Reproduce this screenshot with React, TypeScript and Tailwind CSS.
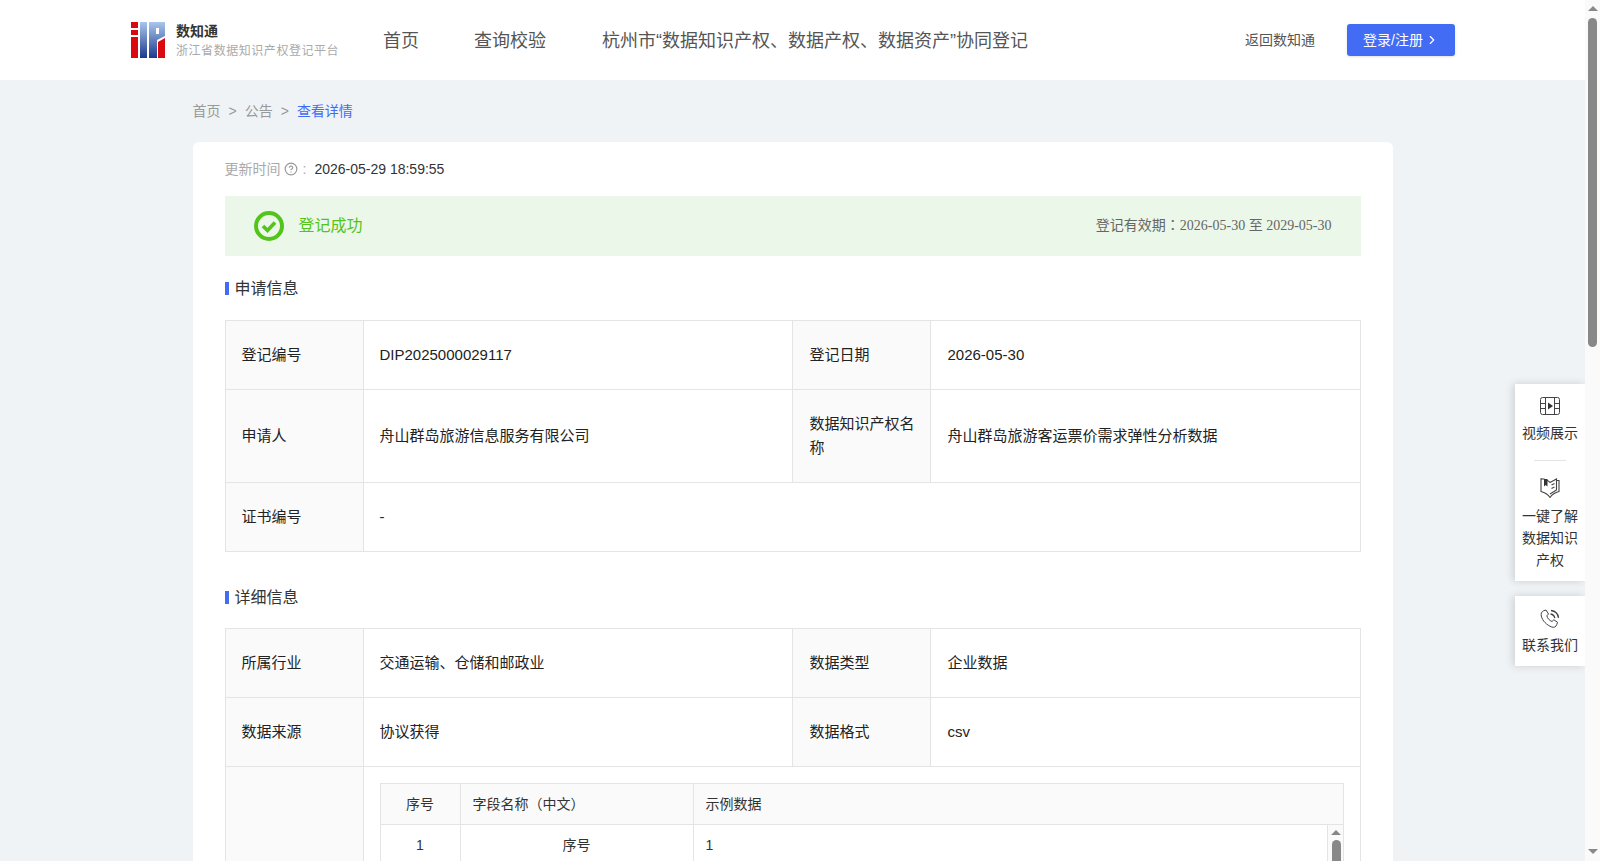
import { ChevronRight, CircleHelp } from "lucide-react";

const cn = "font-['Liberation_Sans','Noto_Sans_CJK_SC',sans-serif]";

const Logo = () => (
  <svg width="34" height="36" viewBox="0 0 34 36" className="shrink-0">
    <defs>
      <linearGradient id="blue" x1="0" y1="0" x2="0" y2="1">
        <stop offset="0" stopColor="#a9c6ee" />
        <stop offset="1" stopColor="#1c3a8c" />
      </linearGradient>
    </defs>
    <rect x="0" y="0" width="7" height="6" fill="#d9090f" />
    <rect x="0" y="8" width="7" height="5" fill="#d9090f" />
    <rect x="0" y="15" width="7" height="21" fill="#d9090f" />
    <rect x="9" y="0" width="7" height="36" fill="url(#blue)" />
    <path d="M18 0H34V14L26 18V36H18Z" fill="url(#blue)" />
    <rect x="25" y="6" width="3" height="6" fill="#fff" />
    <path d="M27 36V20L34 16V36Z" fill="#d9090f" />
  </svg>
);

const VideoIcon = () => (
  <svg width="20" height="18" viewBox="0 0 20 18" fill="none" stroke="#444" strokeWidth="1">
    <rect x="0.5" y="0.5" width="19" height="17" rx="2" />
    <path d="M5.5 0.5V17.500M14.5 0.5V17.500M0.5 6.500H5.5M0.5 11.500H5.5M14.5 6.500H19.500M14.5 11.500H19.500" />
    <path d="M8 5.500L13 9L8 12.500Z" fill="#333" stroke="none" />
  </svg>
);

const BookIcon = () => (
  <svg width="20" height="20" viewBox="0 0 20 20" fill="none" stroke="#444" strokeWidth="1.1">
    <path d="M10 4.500C8 2.500 5 1 1 0.800V13.500C5 14.500 8 16.500 10 19.500C12 16.500 15 14.500 19 13.500V2.500H16.500" />
    <path d="M10 4.500L16.500 1V12L10 16" />
    <path d="M11.500 7L14.500 5.500M11.500 10.500L14.500 9" />
    <path d="M4 1H7.500V8.500L5.700 7L4 8.500Z" fill="#333" stroke="none" />
  </svg>
);

const PhoneIcon = () => (
  <svg width="20" height="20" viewBox="0 0 20 20" fill="none" stroke="#444" strokeWidth="1">
    <path d="M3.500 1.800L6 1L8.500 5L6.800 6.800C7.500 9.500 9.500 11.500 12 12.500L13.800 10.800L17.500 13.200L16.800 15.500C16 18 14 18.800 11.800 18C6.800 16.200 2.500 12 1.300 7C0.800 4.500 1.500 2.800 3.500 1.800Z" />
    <path d="M10.500 5C12.800 5.300 14.500 7 14.800 9.200M11 1.500C15 2 18 5 18.500 8.800" strokeWidth="1.300" />
  </svg>
);

const LabelCell = ({ children, className = "" }: { children?: React.ReactNode; className?: string }) => (
  <td className={`border border-[#e4e4e4] bg-[#fafafa] px-4 leading-[24px] text-[#222] ${className}`}>
    {children}
  </td>
);

const ValueCell = ({ children, colSpan, className = "" }: { children?: React.ReactNode; colSpan?: number; className?: string }) => (
  <td colSpan={colSpan} className={`border border-[#e4e4e4] px-4 text-[#222] ${className}`}>
    {children}
  </td>
);

const Cols = () => (
  <colgroup>
    <col className="w-[138px]" />
    <col className="w-[429px]" />
    <col className="w-[138px]" />
    <col />
  </colgroup>
);

const SectionTitle = ({ title }: { title: string }) => (
  <div className="flex h-6 items-center gap-1.5 text-base text-[#333]">
    <span className="h-[13px] w-1 bg-[#436cf5]" />
    <span className="pt-px leading-[23px]">{title}</span>
  </div>
);

export default function App() {
  return (
    <div className={`${cn} flex h-[861px] w-[1600px] overflow-hidden bg-white`}>
      <div className="relative h-full w-[1585px] overflow-hidden bg-[#eff3f6]">
        <header className="flex h-20 items-center bg-white pl-[131px] pr-[130px]">
          <div className="flex w-[252px] items-center gap-[11px]">
            <Logo />
            <div>
              <div className="text-sm font-bold leading-5 text-[#333]">数知通</div>
              <div className="pt-px text-xs leading-[18px] tracking-[0.55px] text-[#aaa]">浙江省数据知识产权登记平台</div>
            </div>
          </div>
          <nav className="flex gap-[55px] pt-0.5 text-lg text-[#555]">
            <span>首页</span>
            <span>查询校验</span>
            <span className="ml-px">杭州市“数据知识产权、数据产权、数据资产”协同登记</span>
          </nav>
          <div className="ml-auto flex items-center gap-8">
            <span className="text-sm text-[#555]">返回数知通</span>
            <button className="flex h-8 w-[108px] items-center justify-center gap-0.5 rounded-[3px] bg-[#436cf5] text-sm text-white shadow-sm">
              登录/注册
              <ChevronRight size={14} />
            </button>
          </div>
        </header>

        <main className="mx-auto w-[1200px]">
          <div className="flex h-[62px] items-center text-sm text-[#999]">
            <span>首页</span>
            <span className="mx-2">&gt;</span>
            <span>公告</span>
            <span className="mx-2">&gt;</span>
            <span className="text-[#436cf5]">查看详情</span>
          </div>

          <div className="rounded-t-md bg-white px-8 pb-8">
            <div className="flex h-[54px] items-center text-sm">
              <span className="text-[#aaa]">更新时间</span>
              <CircleHelp size={14} className="ml-[3px] text-[#999]" />
              <span className="ml-[5px] mr-2 text-[#aaa]">:</span>
              <span className="text-[#333]">2026-05-29 18:59:55</span>
            </div>

            <div className="flex h-[60px] items-center justify-between bg-[#ebf7e9] px-[29px]">
              <div className="flex items-center gap-[15px] text-base text-[#52c41a]">
                <svg width="30" height="30" viewBox="0 0 30 30" fill="none" stroke="#52c41a">
                  <circle cx="15" cy="15" r="13" strokeWidth="4" />
                  <path d="M9 15L13.500 19.500L21 11.500" strokeWidth="3.600" />
                </svg>
                登记成功
              </div>
              <div className="h-5 font-['Liberation_Serif','Noto_Sans_CJK_SC',serif] text-sm leading-5 text-[#666]">
                登记有效期<span className="font-['Noto_Sans_CJK_TC',serif] leading-none">：</span>2026-05-30 至 2029-05-30
              </div>
            </div>

            <div className="my-5">
              <SectionTitle title="申请信息" />
            </div>

            <table className="w-full table-fixed border-collapse text-[15px]">
              <Cols />
              <tbody>
                <tr className="h-[69px]">
                  <LabelCell>登记编号</LabelCell>
                  <ValueCell>DIP2025000029117</ValueCell>
                  <LabelCell className="pl-[17px] pr-[15px]">登记日期</LabelCell>
                  <ValueCell className="pl-[17px]">2026-05-30</ValueCell>
                </tr>
                <tr className="h-[93px]">
                  <LabelCell>申请人</LabelCell>
                  <ValueCell>舟山群岛旅游信息服务有限公司</ValueCell>
                  <LabelCell className="pl-[17px] pr-[15px]">数据知识产权名称</LabelCell>
                  <ValueCell className="pl-[17px]">舟山群岛旅游客运票价需求弹性分析数据</ValueCell>
                </tr>
                <tr className="h-[69px]">
                  <LabelCell>证书编号</LabelCell>
                  <ValueCell colSpan={3}>-</ValueCell>
                </tr>
              </tbody>
            </table>

            <div className="mb-[19px] mt-[33px]">
              <SectionTitle title="详细信息" />
            </div>

            <table className="w-full table-fixed border-collapse text-[15px]">
              <Cols />
              <tbody>
                <tr className="h-[69px]">
                  <LabelCell>所属行业</LabelCell>
                  <ValueCell>交通运输、仓储和邮政业</ValueCell>
                  <LabelCell className="pl-[17px] pr-[15px]">数据类型</LabelCell>
                  <ValueCell className="pl-[17px]">企业数据</ValueCell>
                </tr>
                <tr className="h-[69px]">
                  <LabelCell>数据来源</LabelCell>
                  <ValueCell>协议获得</ValueCell>
                  <LabelCell className="pl-[17px] pr-[15px]">数据格式</LabelCell>
                  <ValueCell className="pl-[17px]">csv</ValueCell>
                </tr>
                <tr>
                  <LabelCell />
                  <td colSpan={3} className="border border-[#e4e4e4] p-4">
                    <table className="w-full table-fixed border-collapse text-sm text-[#333]">
                      <colgroup>
                        <col className="w-20" />
                        <col className="w-[233px]" />
                        <col />
                      </colgroup>
                      <thead>
                        <tr className="h-[41px] bg-[#fafafa]">
                          <th className="border border-[#e4e4e4] font-normal">序号</th>
                          <th className="border border-[#e4e4e4] px-3 text-left font-normal">字段名称（中文）</th>
                          <th className="border border-[#e4e4e4] px-3 text-left font-normal">示例数据</th>
                        </tr>
                      </thead>
                      <tbody>
                        <tr className="h-[39px]">
                          <td className="border border-[#e4e4e4] text-center">1</td>
                          <td className="border border-[#e4e4e4] text-center">序号</td>
                          <td className="border border-[#e4e4e4] p-0">
                            <div className="flex h-[39px] items-center justify-between pl-3">
                              1
                              <div className="flex h-full w-4 flex-col items-center border-l border-[#e4e4e4] bg-[#fafafa] pl-0.5 pt-[5px]">
                                <span className="h-0 w-0 border-x-[5px] border-b-[5px] border-x-transparent border-b-[#888]" />
                                <span className="mt-[5px] h-10 w-[9px] rounded-t-full bg-[#888]" />
                              </div>
                            </div>
                          </td>
                        </tr>
                      </tbody>
                    </table>
                  </td>
                </tr>
              </tbody>
            </table>
          </div>
        </main>

        {/* floating side buttons */}
        <div className="absolute right-0 top-[384px] w-[70px] text-center text-sm leading-[22px] text-[#333]">
          <div className="bg-white px-[7px] pb-2.5 pt-[13px] shadow-[-2px_0_8px_rgba(0,0,0,0.15)]">
            <div className="flex h-[18px] justify-center"><VideoIcon /></div>
            <div className="mt-[7px]">视频展示</div>
            <div className="mx-auto mb-[17px] mt-4 h-px w-8 bg-[#e4e4e4]" />
            <div className="flex h-5 justify-center"><BookIcon /></div>
            <div className="mt-[7px]">一键了解数据知识产权</div>
          </div>
          <div className="mt-[15px] bg-white px-[7px] pb-2.5 pt-[13px] shadow-[-2px_0_8px_rgba(0,0,0,0.15)]">
            <div className="flex h-5 justify-center"><PhoneIcon /></div>
            <div className="mt-[5px]">联系我们</div>
          </div>
        </div>
      </div>

      {/* page scrollbar */}
      <div className="flex h-full w-[15px] flex-col items-center bg-[#fafafa] pb-[7px] pt-[6px]">
        <span className="h-0 w-0 border-x-[5px] border-b-[5px] border-x-transparent border-b-[#888]" />
        <span className="mt-[7px] h-[329px] w-[9px] rounded-full bg-[#888]" />
        <span className="mt-auto h-0 w-0 border-x-[5px] border-t-[5px] border-x-transparent border-t-[#888]" />
      </div>
    </div>
  );
}
